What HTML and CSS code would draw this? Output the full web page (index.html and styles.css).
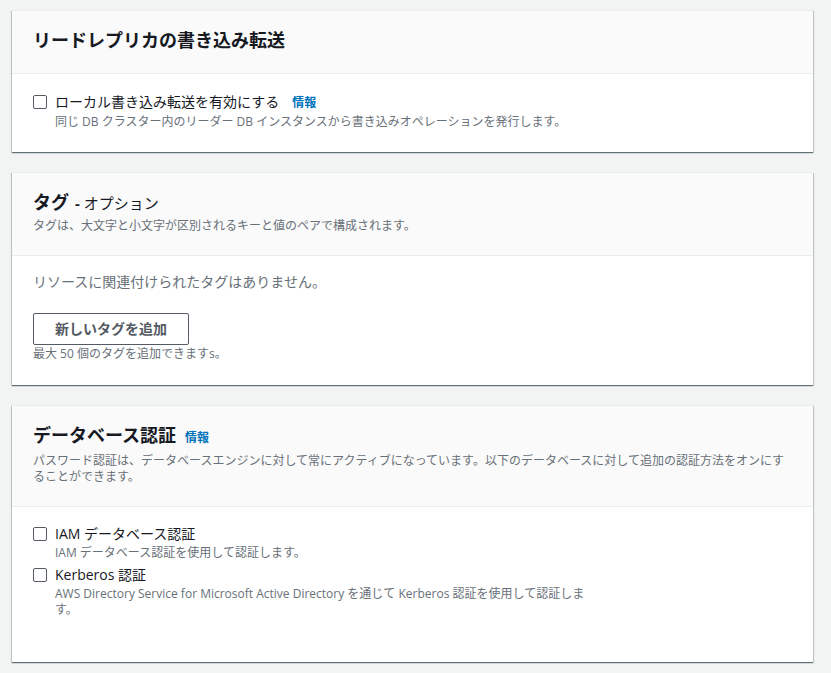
FILE: index.html
```html
<!DOCTYPE html>
<html lang="ja">
<head>
<meta charset="utf-8">
<link rel="stylesheet" href="styles.css">
</head>
<body>
<div class="page">
  <section class="card">
    <div class="card-header">
      <h2 class="title">リードレプリカの書き込み転送</h2>
    </div>
    <div class="card-body body-1">
      <div class="check-row">
        <span class="checkbox"></span>
        <div class="check-text">
          <div class="label">ローカル書き込み転送を有効にする<a class="info">情報</a></div>
          <div class="desc">同じ DB クラスター内のリーダー DB インスタンスから書き込みオペレーションを発行します。</div>
        </div>
      </div>
    </div>
  </section>

  <section class="card">
    <div class="card-header">
      <h2 class="title">タグ <span class="opt"><b>-</b> オプション</span></h2>
      <p class="header-desc">タグは、大文字と小文字が区別されるキーと値のペアで構成されます。</p>
    </div>
    <div class="card-body body-2">
      <p class="empty">リソースに関連付けられたタグはありません。</p>
      <button class="btn">新しいタグを追加</button>
      <p class="desc">最大 50 個のタグを追加できますs。</p>
    </div>
  </section>

  <section class="card">
    <div class="card-header">
      <h2 class="title">データベース認証<a class="info">情報</a></h2>
      <p class="header-desc">パスワード認証は、データベースエンジンに対して常にアクティブになっています。以下のデータベースに対して追加の認証方法をオンにすることができます。</p>
    </div>
    <div class="card-body body-3">
      <div class="check-row">
        <span class="checkbox"></span>
        <div class="check-text">
          <div class="label">IAM データベース認証</div>
          <div class="desc">IAM データベース認証を使用して認証します。</div>
        </div>
      </div>
      <div class="check-row">
        <span class="checkbox"></span>
        <div class="check-text">
          <div class="label">Kerberos 認証</div>
          <div class="desc narrow">AWS Directory Service for Microsoft Active Directory を通じて Kerberos 認証を使用して認証します。</div>
        </div>
      </div>
    </div>
  </section>
</div>
</body>
</html>
```

FILE: styles.css
```css
html, body {
  margin: 0;
  padding: 0;
  background: #f2f3f3;
}
body {
  font-family: "Open Sans", "Noto Sans CJK JP", sans-serif;
  color: #16191f;
  font-size: 14px;
  line-height: 22px;
}
.page {
  display: flex;
  flex-direction: column;
  gap: 20px;
  padding: 10px 18px 12px 12px;
}
.card {
  background: #ffffff;
  border-top: 1px solid #eaeded;
  box-shadow: 0 1px 1px 0 rgba(0, 28, 36, 0.45), 1px 1px 1px 0 rgba(0, 28, 36, 0.15), -1px 1px 1px 0 rgba(0, 28, 36, 0.15);
}
.card-header {
  background: #fafafa;
  border-bottom: 1px solid #eaeded;
  padding: 17px 20px 21px 21px;
}
.title {
  margin: 0;
  font-size: 18px;
  line-height: 24px;
  font-weight: 700;
  display: flex;
  align-items: baseline;
}
.opt {
  font-size: 15px;
  font-weight: 400;
  margin-left: 6px;
}
.opt b {
  font-weight: 700;
}
.info {
  color: #0073bb;
  font-size: 12px;
  font-weight: 700;
  margin-left: 13px;
  cursor: pointer;
}
.title .info {
  margin-left: 9px;
}
.header-desc {
  margin: 3px 0 0;
  font-size: 12px;
  line-height: 16px;
  color: #687078;
}
.card-body {
  padding: 17px 20px 22px 21px;
}
.body-2 {
  padding-top: 15px;
  padding-bottom: 23px;
}
.body-3 {
  padding-top: 16px;
  padding-bottom: 44px;
  display: flex;
  flex-direction: column;
  gap: 3px;
}
.check-row {
  display: flex;
  gap: 8px;
  align-items: flex-start;
}
.checkbox {
  width: 12px;
  height: 12px;
  border: 1px solid #545b64;
  border-radius: 2px;
  background: #fff;
  margin-top: 4px;
  flex: none;
}
.label {
  font-size: 14px;
  line-height: 22px;
}
.desc {
  margin: 0;
  font-size: 12px;
  line-height: 16px;
  color: #687078;
}
.narrow {
  max-width: 536px;
}
.empty {
  margin: 0 0 20px;
  color: #687078;
  font-size: 14px;
  line-height: 22px;
}
.btn {
  display: block;
  font-family: inherit;
  font-size: 14px;
  font-weight: 700;
  line-height: 22px;
  color: #545b64;
  background: #fff;
  border: 1px solid #545b64;
  border-radius: 2px;
  padding: 4px 21px;
  margin-bottom: 1px;
}
```
